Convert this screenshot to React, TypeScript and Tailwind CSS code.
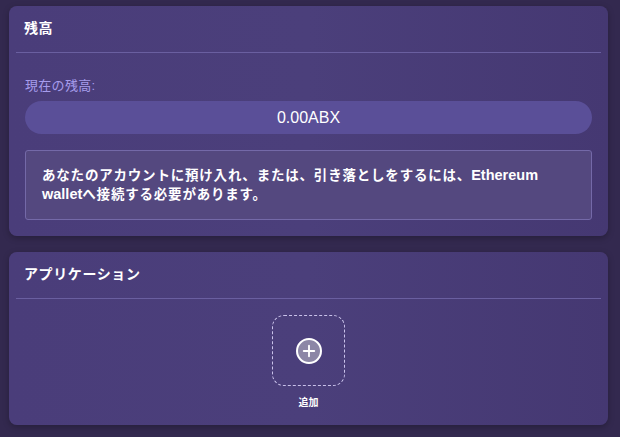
import { Plus } from "lucide-react";

const font = { fontFamily: '"Liberation Sans", "Noto Sans CJK JP", sans-serif' };

function Card({ title, children }: { title: string; children: React.ReactNode }) {
  return (
    <section className="rounded-lg bg-gradient-to-r from-[#4a3d7a] via-[#4b3f7b] to-[#453872] shadow-[0_2px_6px_rgba(0,0,0,0.25)]">
      <div className="mx-[7px] flex h-[47px] items-end border-b border-[#6a5fa0] px-[8px] pb-[17px]">
        <h2 className="text-[14px] font-bold leading-none tracking-[0.6px] text-white">{title}</h2>
      </div>
      {children}
    </section>
  );
}

export default function App() {
  return (
    <div className="h-[437px] w-[620px] bg-[#33294f] pl-[9px] pr-[12px] pt-[6px]" style={font}>
      <div className="flex flex-col gap-[16px]">
        <Card title="残高">
          <div className="px-[16px] pb-[16px] pt-[26px]">
            <p className="text-[13px] leading-none tracking-[0.3px] text-[#a69cec]">現在の残高:</p>
            <div className="mt-[9px] flex h-[33px] items-center justify-center rounded-full bg-[#5a4f98] text-[16px] text-white">
              0.00ABX
            </div>
            <div className="mt-[16px] h-[70px] rounded-[3px] border border-[#7469a8] bg-[#54487f] px-[16px] pt-[15px] text-[13.5px] font-bold leading-[19px] tracking-[0.8px] text-white">
              あなたのアカウントに預け入れ、または、引き落としをするには、
              <span className="text-[14.5px] tracking-normal">Ethereum</span>
              <br />
              <span className="text-[14.5px] tracking-normal">wallet</span>へ接続する必要があります。
            </div>
          </div>
        </Card>
        <Card title="アプリケーション">
          <div className="flex flex-col items-center pb-[17px] pt-[16px]">
            <div className="flex h-[71px] w-[73px] items-center justify-center rounded-[12px] border border-dashed border-[#c9c2ea]">
              <div className="flex h-[26px] w-[26px] items-center justify-center rounded-full border-[2.5px] border-white bg-[#8c86a6]">
                <Plus size={18} strokeWidth={2.5} className="text-white" />
              </div>
            </div>
            <span className="mt-[12px] text-[10px] font-bold leading-none text-white">追加</span>
          </div>
        </Card>
      </div>
    </div>
  );
}
